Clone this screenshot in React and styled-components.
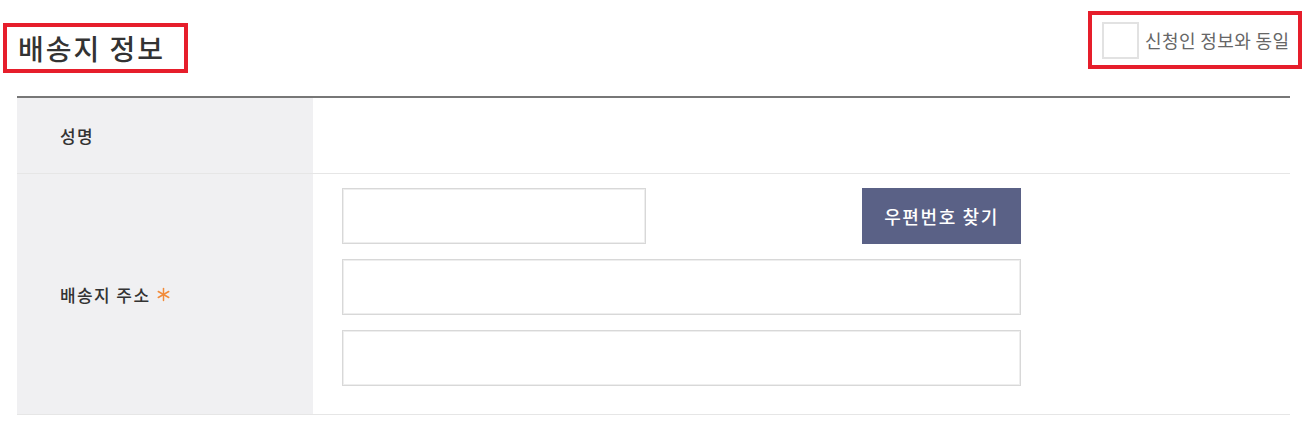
import styled, { createGlobalStyle } from "styled-components";

const GlobalStyle = createGlobalStyle`
  body {
    margin: 0;
    background: #fff;
    font-family: "Noto Sans CJK KR", "Noto Sans", sans-serif;
    color: #333;
  }
  * { box-sizing: border-box; }
`;

const Page = styled.div`
  width: 1308px;
  height: 444px;
  overflow: hidden;
`;

const Header = styled.div`
  display: flex;
  justify-content: space-between;
  align-items: flex-start;
  padding: 0 6px 0 3px;
`;

const TitleBox = styled.div`
  margin-top: 23px;
  width: 185px;
  height: 50px;
  border: 4px solid #e61e2b;
  padding: 0 0 0 11px;
  display: flex;
  align-items: center;
`;

const Title = styled.h2`
  margin: 0;
  font-size: 28px;
  font-weight: 500;
  letter-spacing: 2px;
  color: #333;
`;

const SameBox = styled.label`
  margin-top: 11px;
  width: 214px;
  height: 58px;
  border: 4px solid #e61e2b;
  padding-left: 10px;
  display: flex;
  align-items: center;
  gap: 6px;
  cursor: pointer;
`;

const CheckBox = styled.span`
  width: 37px;
  height: 37px;
  border: 2px solid #e2e2e2;
  background: #fff;
  flex-shrink: 0;
`;

const SameText = styled.span`
  font-size: 18px;
  color: #666;
  letter-spacing: 0.4px;
  white-space: nowrap;
`;

const Table = styled.div`
  margin: 23px 18px 0 17px;
  border-top: 2px solid #777;
`;

const Row = styled.div`
  display: grid;
  grid-template-columns: 296px 1fr;
  min-height: ${(p) => p.$height}px;
  border-bottom: 1px solid #e6e6e6;
`;

const Label = styled.div`
  background: #f0f0f2;
  padding-left: 43px;
  display: flex;
  align-items: center;
  gap: 6px;
  font-size: 17px;
  font-weight: 500;
  color: #333;
  letter-spacing: 1.4px;
`;

const Cell = styled.div`
  padding: 14px 0 28px 29px;
  display: flex;
  flex-direction: column;
  gap: 15px;
`;

const FieldLine = styled.div`
  width: 679px;
  display: flex;
  justify-content: space-between;
`;

const Input = styled.input`
  width: ${(p) => p.$width || 679}px;
  height: 56px;
  border: 1px solid #d8d8d8;
  box-shadow: inset 0 0 0 1px #eeeeee;
  outline: none;
  padding: 0 12px;
  font-size: 16px;
  font-family: inherit;
`;

const ZipButton = styled.button`
  width: 159px;
  height: 56px;
  border: none;
  background: #5a6186;
  color: #fff;
  font-family: inherit;
  font-size: 18px;
  font-weight: 500;
  letter-spacing: 1.6px;
  cursor: pointer;
`;

const Required = () => (
  <svg width="15" height="15" viewBox="0 0 16 16" aria-hidden="true">
    <g stroke="#f28b3a" strokeWidth="1.6" strokeLinecap="round">
      <line x1="8" y1="1.5" x2="8" y2="14.5" />
      <line x1="2.4" y1="4.8" x2="13.6" y2="11.2" />
      <line x1="2.4" y1="11.2" x2="13.6" y2="4.8" />
    </g>
  </svg>
);

export default function App() {
  return (
    <Page>
      <GlobalStyle />
      <Header>
        <TitleBox>
          <Title>배송지 정보</Title>
        </TitleBox>
        <SameBox>
          <CheckBox />
          <SameText>신청인 정보와 동일</SameText>
        </SameBox>
      </Header>
      <Table>
        <Row $height={76}>
          <Label>성명</Label>
          <div />
        </Row>
        <Row $height={240}>
          <Label>
            배송지 주소 <Required />
          </Label>
          <Cell>
            <FieldLine>
              <Input $width={304} />
              <ZipButton>우편번호 찾기</ZipButton>
            </FieldLine>
            <Input />
            <Input />
          </Cell>
        </Row>
      </Table>
    </Page>
  );
}
